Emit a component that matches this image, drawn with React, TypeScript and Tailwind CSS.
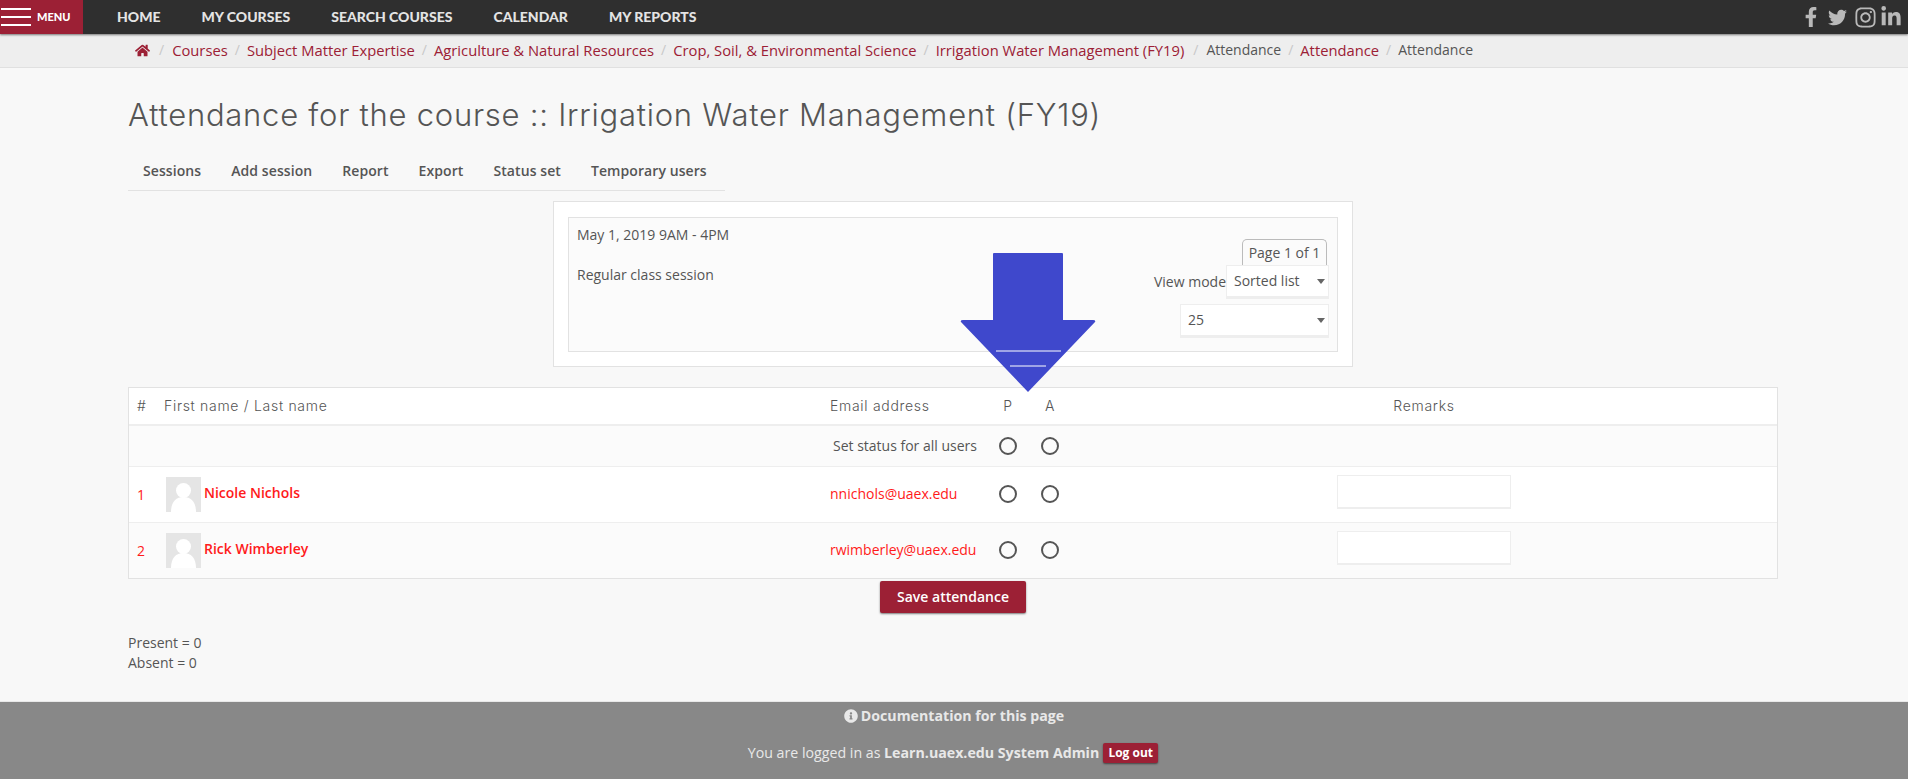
import { FaFacebookF, FaHome, FaInfoCircle, FaInstagram, FaLinkedinIn, FaTwitter } from "react-icons/fa";

const navLinks = ["HOME", "MY COURSES", "SEARCH COURSES", "CALENDAR", "MY REPORTS"];
const tabs = ["Sessions", "Add session", "Report", "Export", "Status set", "Temporary users"];
const crumbs = [
  { label: "Courses", link: true },
  { label: "Subject Matter Expertise", link: true },
  { label: "Agriculture & Natural Resources", link: true },
  { label: "Crop, Soil, & Environmental Science", link: true },
  { label: "Irrigation Water Management (FY19)", link: true, extra: true },
  { label: "Attendance", link: false },
  { label: "Attendance", link: true },
  { label: "Attendance", link: false },
];
const students = [
  { id: 1, name: "Nicole Nichols", email: "nnichols@uaex.edu", bg: "bg-white", row: "h-[56px] border-b border-[#eeeeee]" },
  { id: 2, name: "Rick Wimberley", email: "rwimberley@uaex.edu", bg: "bg-[#fbfbfb]", row: "h-[55px]" },
];

const rowGrid = "grid grid-cols-[28px_665px_165px_42px_42px_1fr] items-center";
const lightFont = "font-['Inter',sans-serif] font-light";

const Radio = ({ className = "" }: { className?: string }) => (
  <div className={`flex justify-center ${className}`}>
    <input type="radio" className="appearance-none block w-[18px] h-[18px] rounded-full border-2 border-[#555] bg-transparent" />
  </div>
);

const Caret = () => (
  <svg width="8" height="5" viewBox="0 0 8 5" className="shrink-0">
    <path d="M0 0h8L4 5z" fill="#666" />
  </svg>
);

const Avatar = () => (
  <svg width="35" height="35" viewBox="0 0 35 35" className="shrink-0 ml-[11px] mr-[3px]">
    <rect width="35" height="35" fill="#e5e5e5" />
    <circle cx="17.5" cy="13.5" r="7.5" fill="#fff" />
    <path d="M5 35c0-10 5-15 12.5-15S30 25 30 35z" fill="#fff" />
  </svg>
);

const App = () => {
  return (
    <div className="relative w-[1908px] h-[779px] overflow-hidden bg-[#f8f8f8] font-['Open_Sans',sans-serif] text-[14px] leading-5 text-[#555]">
      <header className="h-[34px] bg-[#2f2f2f] flex items-center shadow-[0_1px_2px_rgba(0,0,0,0.5)] relative z-10">
        <div className="w-[83px] h-full bg-[#9c2035] flex items-center pl-px gap-[6px]">
          <div className="w-[30px] flex flex-col gap-[6px]">
            <div className="h-[2px] bg-white" />
            <div className="h-[2px] bg-white" />
            <div className="h-[2px] bg-white" />
          </div>
          <span className="font-['Lato',sans-serif] font-black text-[11px] text-white">MENU</span>
        </div>
        <nav className="flex gap-[41px] ml-[34px] font-['Lato',sans-serif] font-black text-[14px] text-[#e4e4e4]">
          {navLinks.map((item) => (
            <span key={item}>{item}</span>
          ))}
        </nav>
        <div className="ml-auto flex items-center gap-[7px] pr-[6px] text-[#b9b9b9]">
          <FaFacebookF size={20} />
          <FaTwitter size={19} />
          <FaInstagram size={23} />
          <FaLinkedinIn size={22} className="-ml-[4px]" />
        </div>
      </header>

      <div className="h-[34px] bg-[#eeeeee] border-b border-[#e0e0e0] flex items-center pl-[135px] pb-px">
        <FaHome size={15} className="text-[#9c2035]" />
        <span className="ml-[9px] mr-[8px] text-[#c8c8c8]">/</span>
        {crumbs.map((c, i) => (
          <span key={i} className="flex items-center">
            <span className={c.link ? "text-[14.75px] text-[#9c2035]" : "text-[14px] text-[#555]"}>{c.label}</span>
            {i < crumbs.length - 1 && (
              <span className={c.extra ? "ml-[9px] mr-[8px] text-[#c8c8c8]" : "mx-[7px] text-[#c8c8c8]"}>/</span>
            )}
          </span>
        ))}
      </div>

      <main className="pl-[128px] pr-[130px] pb-[28px]">
        <h1 className={`${lightFont} pt-[27px] text-[31px] leading-10 tracking-[0.75px] text-[#555]`}>
          Attendance for the course :: Irrigation Water Management (FY19)
        </h1>

        <div className="mt-4 h-10 w-[597px] flex items-center border-b border-[#e2e2e2] font-semibold tracking-[0.08px]">
          {tabs.map((t) => (
            <span key={t} className="px-[15px]">{t}</span>
          ))}
        </div>

        <div className="mt-[10px] ml-[425px] w-[800px] h-[166px] bg-white border border-[#e2e2e2] pt-[15px] px-[14px]">
          <div className="h-[135px] bg-[#fbfbfb] border border-[#e2e2e2] flex justify-between pl-2 pr-2">
            <div className="pt-[7px]">
              <div>May 1, 2019 9AM - 4PM</div>
              <div className="mt-5">Regular class session</div>
            </div>
            <div className="flex flex-col items-end pt-[21px]">
              <div className="h-[26px] w-[85px] mr-[2px] border border-b-0 border-[#bbb] rounded-t-[5px] flex items-center justify-center">
                Page 1 of 1
              </div>
              <div className="flex items-center">
                <span>View mode</span>
                <div className="w-[103px] h-[34px] bg-white border border-[#eee] border-b-[3px] flex items-center justify-between pl-[7px] pr-[3px]">
                  Sorted list
                  <Caret />
                </div>
              </div>
              <div className="mt-[5px] w-[149px] h-[34px] bg-white border border-[#eee] border-b-[3px] flex items-center justify-between pl-[7px] pr-[3px]">
                25
                <Caret />
              </div>
            </div>
          </div>
        </div>

        <div className="mt-[20px] border border-[#e2e2e2]">
          <div className={`${rowGrid} ${lightFont} h-[38px] bg-white border-b-2 border-[#eeeeee] tracking-[0.7px]`}>
            <span className="pl-2">#</span>
            <span className="pl-[7px]">First name / Last name</span>
            <span className="pl-2">Email address</span>
            <span className="text-center">P</span>
            <span className="text-center">A</span>
            <span className="text-center">Remarks</span>
          </div>
          <div className={`${rowGrid} h-[41px] bg-[#fbfbfb] border-b border-[#eeeeee]`}>
            <span />
            <span />
            <span className="pl-[11px] whitespace-nowrap">Set status for all users</span>
            <Radio />
            <Radio />
            <span />
          </div>
          {students.map((s) => (
            <div key={s.id} className={`${rowGrid} ${s.row} ${s.bg}`}>
              <span className="pl-2 text-[#ff1a1a]">{s.id}</span>
              <div className="flex items-center -ml-[2px]">
                <Avatar />
                <span className="font-semibold text-[#ff1a1a] -mt-[3px]">{s.name}</span>
              </div>
              <span className="pl-2 -mt-px text-[#ff1a1a]">{s.email}</span>
              <Radio className="-mt-px" />
              <Radio className="-mt-px" />
              <div className="flex justify-center">
                <input type="text" className="w-[174px] h-[34px] -mt-[5px] bg-white border border-[#eee] border-b-[2px]" />
              </div>
            </div>
          ))}
        </div>

        <div className="mt-[2px] ml-[752px] w-[146px] h-[32px] bg-[#9c2035] rounded-[2px] shadow-[0_1px_2px_rgba(0,0,0,0.5)] flex items-center justify-center font-semibold text-white">
          Save attendance
        </div>

        <div className="mt-5">
          <div>Present = 0</div>
          <div>Absent = 0</div>
        </div>
      </main>

      <footer className="h-[78px] bg-[#888888] border-t border-[#e8e8e8] text-[#e8e8e8] text-[14.2px] flex flex-col items-center">
        <div className="mt-[4px] h-5 flex items-center gap-[3px] font-bold">
          <FaInfoCircle size={14} />
          Documentation for this page
        </div>
        <div className="mt-[17px] -ml-[2px] flex items-center">
          <span>You are logged in as <b>Learn.uaex.edu System Admin</b></span>
          <span className="ml-1 h-5 w-[55px] bg-[#9c2035] rounded-[2px] shadow-[0_1px_2px_rgba(0,0,0,0.5)] flex items-center justify-center text-[12px] font-bold text-white">
            Log out
          </span>
        </div>
      </footer>

      {/* arrow pasted over the screenshot */}
      <svg width="136" height="140" viewBox="0 0 136 140" className="absolute left-[960px] top-[253px] z-20">
        <path d="M33 1q0-1 1-1h68q1 0 1 1v66h30q3 0 2 2l-67 70-67-70q-1-2 2-2h30z" fill="#3f48cc" />
        <path d="M36 98h65" stroke="#fff" strokeWidth="1" />
        <path d="M50 113h36" stroke="#fff" strokeWidth="1" />
      </svg>
    </div>
  );
};

export default App;
